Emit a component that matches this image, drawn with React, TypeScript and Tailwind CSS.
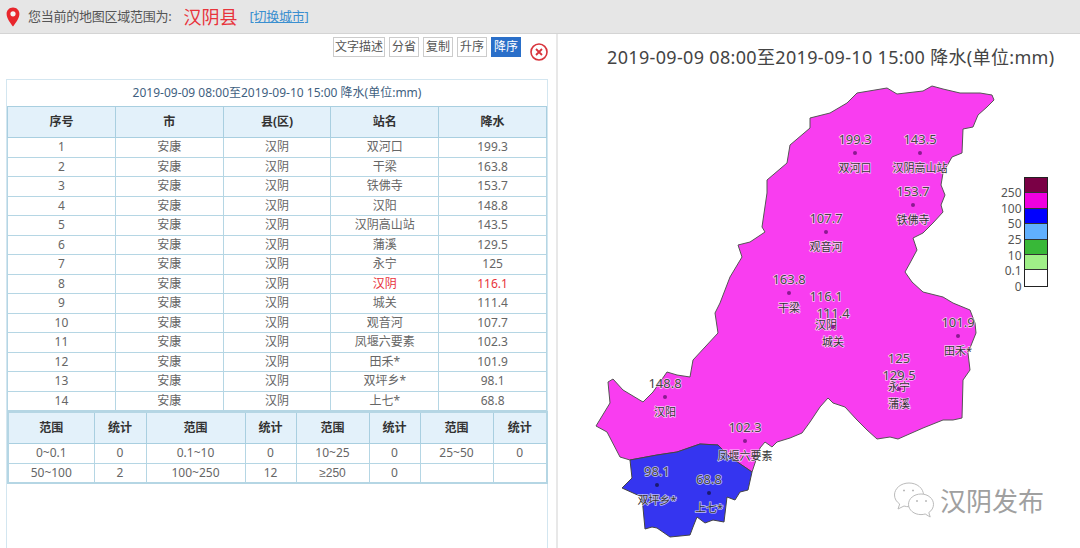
const stations = [
  ["双河口", "199.3"],
  ["干梁", "163.8"],
  ["铁佛寺", "153.7"],
  ["汉阳", "148.8"],
  ["汉阴高山站", "143.5"],
  ["蒲溪", "129.5"],
  ["永宁", "125"],
  ["汉阴", "116.1"],
  ["城关", "111.4"],
  ["观音河", "107.7"],
  ["凤堰六要素", "102.3"],
  ["田禾*", "101.9"],
  ["双坪乡*", "98.1"],
  ["上七*", "68.8"],
];

const statRows = [
  ["0~0.1", "0", "0.1~10", "0", "10~25", "0", "25~50", "0"],
  ["50~100", "2", "100~250", "12", "≥250", "0", "", ""],
];

const mapPoints = [
  { name: "双河口", value: "199.3", x: 855, y: 153 },
  { name: "汉阴高山站", value: "143.5", x: 920, y: 153 },
  { name: "铁佛寺", value: "153.7", x: 913, y: 205 },
  { name: "观音河", value: "107.7", x: 826, y: 232 },
  { name: "干梁", value: "163.8", x: 789, y: 293 },
  { name: "汉阴", value: "116.1", x: 826, y: 310 },
  { name: "城关", value: "111.4", x: 833, y: 327 },
  { name: "田禾*", value: "101.9", x: 958, y: 336 },
  { name: "永宁", value: "125", x: 899, y: 372 },
  { name: "蒲溪", value: "129.5", x: 899, y: 389 },
  { name: "汉阳", value: "148.8", x: 665, y: 397 },
  { name: "凤堰六要素", value: "102.3", x: 745, y: 441 },
  { name: "双坪乡*", value: "98.1", x: 657, y: 485, dot: "#1a1a70" },
  { name: "上七*", value: "68.8", x: 709, y: 493, dot: "#1a1a70" },
];

const legend = [
  ["#7a0045", "250"],
  ["#f000e0", "100"],
  ["#0000ff", "50"],
  ["#60b0ff", "25"],
  ["#38b838", "10"],
  ["#a0f088", "0.1"],
  ["#ffffff", "0"],
];

const magentaArea =
  "932,86 943,89 960,93 980,93 992,95 994,100 987,107 978,115 973,127 963,129 962,153 952,157 943,173 941,185 945,195 941,205 943,212 933,223 923,233 913,238 917,250 910,263 905,272 912,282 923,292 943,297 953,303 970,310 975,323 976,333 968,353 970,370 963,380 962,418 953,420 943,420 923,428 898,439 890,437 877,439 867,430 857,420 845,407 833,403 828,398 820,407 810,422 802,433 790,438 777,442 772,447 765,442 760,448 752,472 730,457 718,445 700,444 677,452 657,455 630,460 620,457 607,432 596,426 610,403 608,382 613,379 623,390 643,402 653,392 667,372 677,375 690,377 693,360 718,333 715,313 720,303 730,277 742,257 738,245 750,242 765,232 762,227 767,193 767,180 787,163 790,145 810,128 810,118 830,113 847,103 857,93 887,88 897,94 923,91";

const blueArea =
  "630,460 657,455 677,452 700,444 718,445 730,457 752,472 748,490 740,492 735,500 727,497 724,522 713,520 705,523 697,517 693,527 690,535 670,537 657,528 652,527 645,529 642,497 622,488 632,478";

function RainMap() {
  return (
    <svg width="1080" height="548" viewBox="0 0 1080 548" className="absolute left-[-558px] top-[-84px]">
      <polygon points={magentaArea} fill="#f93df0" stroke="#555" strokeWidth="1" />
      <polygon points={blueArea} fill="#3535f0" stroke="#444" strokeWidth="1" />
      {mapPoints.map((p) => (
        <g key={p.name} fontFamily="'Noto Sans','Noto Sans CJK SC',sans-serif" textAnchor="middle" dominantBaseline="central">
          <circle cx={p.x} cy={p.y} r="2" fill={p.dot ?? "#8a1a90"} />
          <text x={p.x} y={p.y - 14} fontSize="13" fill="#444" stroke="#fff" strokeOpacity="0.7" strokeWidth="1.5" paintOrder="stroke">
            {p.value}
          </text>
          <text x={p.x} y={p.y + 14} fontSize="11" fill="#333" stroke="#fff" strokeOpacity="0.7" strokeWidth="1.5" paintOrder="stroke">
            {p.name}
          </text>
        </g>
      ))}
    </svg>
  );
}

export default function App() {
  return (
    <div className="w-[1080px] h-[548px] overflow-hidden bg-white text-[#666] text-xs font-['Noto_Sans','Noto_Sans_CJK_SC',sans-serif]">
      <header className="flex items-center h-[34px] bg-[#e6e6e6] border-b border-[#d4d4d4] pl-[6px]">
        <svg width="14" height="20" viewBox="0 0 14 20">
          <path d="M7 0.5C3.2 0.5 0.6 3.4 0.6 6.9 0.6 11.3 5 16.8 7 19.5 9 16.8 13.4 11.3 13.4 6.9 13.4 3.4 10.8 0.5 7 0.5Z" fill="#e8262c" />
          <circle cx="7" cy="6.8" r="2.6" fill="#f4f4f4" />
        </svg>
        <span className="ml-2 text-[13px] tracking-[-0.25px] text-[#555]">您当前的地图区域范围为:</span>
        <span className="ml-3 text-lg text-[#e8343c]">汉阴县</span>
        <a className="ml-3 text-[13px] tracking-[-0.25px] text-[#3a8fd0] underline">[切换城市]</a>
      </header>

      <div className="flex h-[514px]">
        <section className="w-[558px] border-r-2 border-[#e8e8e8] pl-[6px]">
          <div className="flex items-start justify-end gap-1 h-[45px] pt-[3px] pr-[8px]">
            <button className="h-[20px] w-[52px] bg-white border border-[#ccc] text-[#555] leading-none">文字描述</button>
            <button className="h-[20px] w-[30px] bg-white border border-[#ccc] text-[#555] leading-none">分省</button>
            <button className="h-[20px] w-[30px] bg-white border border-[#ccc] text-[#555] leading-none">复制</button>
            <button className="h-[20px] w-[30px] bg-white border border-[#ccc] text-[#555] leading-none">升序</button>
            <button className="h-[20px] w-[30px] bg-[#2a6fc9] border border-[#2a6fc9] text-white leading-none">降序</button>
            <svg width="18" height="18" viewBox="0 0 18 18" className="ml-[5px] mt-[6px]">
              <circle cx="9" cy="9" r="8" fill="none" stroke="#d8343c" strokeWidth="1.6" />
              <path d="M6 6L12 12M12 6L6 12" stroke="#d8343c" strokeWidth="1.8" />
            </svg>
          </div>

          <div className="w-[542px] h-[469px] border border-[#d3e6f0] border-b-0">
            <div className="h-[26px] flex items-center justify-center text-[#3f5f7f]">2019-09-09 08:00至2019-09-10 15:00 降水(单位:mm)</div>
            <table className="w-full table-fixed border-collapse text-center">
              <thead>
                <tr className="h-[31px] bg-[#e3f1fa] text-[#333]">
                  {["序号", "市", "县(区)", "站名", "降水"].map((h) => (
                    <th key={h} className="border border-[#a9cfe0] font-bold">{h}</th>
                  ))}
                </tr>
              </thead>
              <tbody>
                {stations.map(([name, value], i) => {
                  const highlight = name === "汉阴";
                  return (
                    <tr key={name} className="h-[19.5px]">
                      <td className="border border-[#b5d6e4] p-0 leading-none">{i + 1}</td>
                      <td className="border border-[#b5d6e4] p-0 leading-none">安康</td>
                      <td className="border border-[#b5d6e4] p-0 leading-none">汉阴</td>
                      <td className={highlight ? "border border-[#b5d6e4] p-0 leading-none text-[#e8343c]" : "border border-[#b5d6e4] p-0 leading-none"}>{name}</td>
                      <td className={highlight ? "border border-[#b5d6e4] p-0 leading-none text-[#e8343c]" : "border border-[#b5d6e4] p-0 leading-none"}>{value}</td>
                    </tr>
                  );
                })}
              </tbody>
            </table>
            <table className="w-[539px] mx-auto table-fixed border-collapse text-center border-2 border-[#b5d6e4]">
              <colgroup>
                <col className="w-[86px]" />
                <col className="w-[52px]" />
                <col className="w-[99px]" />
                <col className="w-[51px]" />
                <col className="w-[73px]" />
                <col className="w-[51px]" />
                <col className="w-[73px]" />
                <col className="w-[54px]" />
              </colgroup>
              <thead>
                <tr className="h-[31px] bg-[#e3f1fa] text-[#333]">
                  {["范围", "统计", "范围", "统计", "范围", "统计", "范围", "统计"].map((h, i) => (
                    <th key={i} className="border border-[#a9cfe0] font-bold">{h}</th>
                  ))}
                </tr>
              </thead>
              <tbody>
                {statRows.map((row, r) => (
                  <tr key={r} className="h-[20px]">
                    {row.map((cell, i) => (
                      <td key={i} className={cell === "≥250" ? "border border-[#b5d6e4] p-0 leading-none font-['Liberation_Sans',sans-serif]" : "border border-[#b5d6e4] p-0 leading-none"}>{cell}</td>
                    ))}
                  </tr>
                ))}
              </tbody>
            </table>
          </div>
        </section>

        <section className="flex-1 flex flex-col">
          <h1 className="h-[50px] pt-[11px] pl-[49px] text-lg leading-6 tracking-[0.33px] whitespace-nowrap text-[#444]">2019-09-09 08:00至2019-09-10 15:00 降水(单位:mm)</h1>
          <div className="relative flex-1">
            <div className="absolute inset-0 overflow-visible">
              <RainMap />
            </div>
            <div className="absolute left-[443px] top-[93px] flex items-start">
              <div className="flex flex-col items-end pt-[8px] pr-[2px]">
                {legend.map(([color, label]) => (
                  <span key={color} className="h-[15.7px] leading-[16px] text-xs text-[#555]">{label}</span>
                ))}
              </div>
              <div className="w-6 border border-[#222]">
                {legend.map(([color]) => (
                  <div key={color} className="h-[15.4px] border-b border-[#333] last:border-b-0" style={{ backgroundColor: color }} />
                ))}
              </div>
            </div>
            <div className="absolute left-[335px] top-[398px] flex items-center gap-[3px] text-[#999]">
              <svg width="44" height="38" viewBox="0 0 44 38" fill="#fff" stroke="#bbb" strokeWidth="1">
                <path d="M16 1C8 1 1.5 6.3 1.5 13c0 3.8 2 6.8 5.2 9L5 27l6-3c1.6.5 3.2.7 5 .7 8 0 14.500-5.300 14.500-11.700C30.500 6.300 24 1 16 1Z" />
                <path d="M28 12c-7 0-12.500 4.600-12.500 10.300S21 32.600 28 32.600c1.500 0 2.900-.2 4.200-.6l5 3-1.400-4.500c3-1.900 4.700-4.800 4.700-8.200C40.500 16.600 35 12 28 12Z" />
                <path d="M10 8.500h2M19 8.500h2M23 19h2M32 19h2" strokeWidth="1.500" />
              </svg>
              <span className="text-[26px] leading-none text-[#a0a0a0]">汉阴发布</span>
            </div>
          </div>
        </section>
      </div>
    </div>
  );
}
